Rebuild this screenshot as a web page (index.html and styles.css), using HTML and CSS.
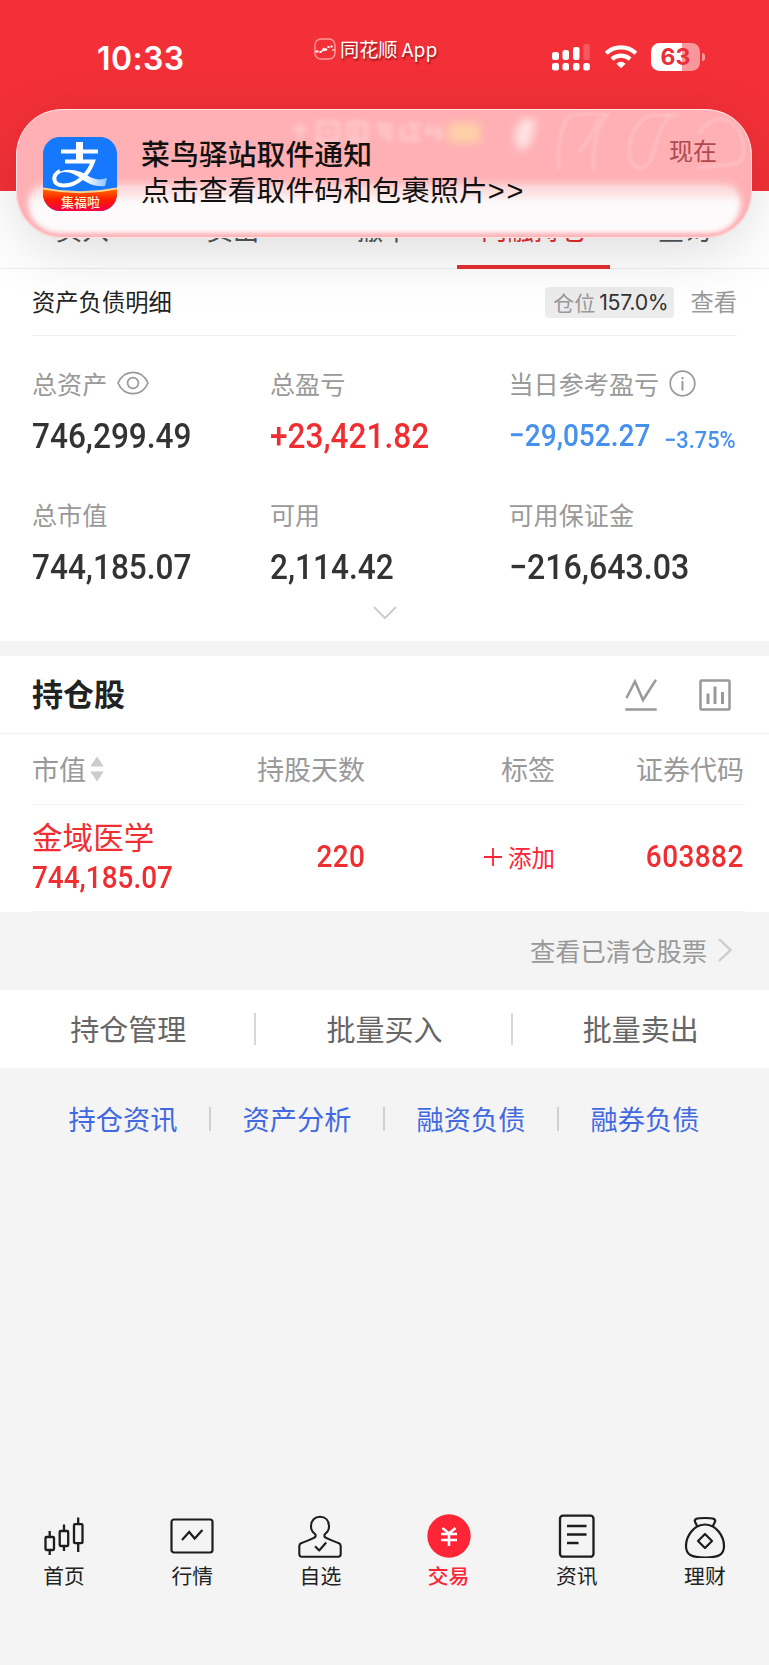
FILE: index.html
```html
<!DOCTYPE html>
<html lang="zh-CN">
<head>
<meta charset="utf-8">
<title>同花顺</title>
<link rel="stylesheet" href="styles.css">
</head>
<body>
<div class="app">
  <header class="top">
    <div class="status">
      <div class="time">10:33</div>
      <div class="appname">
        <svg width="22" height="22" viewBox="0 0 22 22" fill="none"><rect x="1" y="1" width="20" height="20" rx="6" stroke="#ff9a9a" stroke-width="1.4"/><path d="M1.500 13.500h3M5.500 14h2M7.500 12.500h1.500M9.500 10l1 3M12.500 10.500l-1 2M13.500 9h2M16.500 8.500h2" stroke="#fff" stroke-width="2.200"/><path d="M18 12h3" stroke="#fff"/></svg>
        <span>同花顺 App</span>
      </div>
      <div class="indicators">
        <svg class="signal" width="38" height="28" viewBox="0 0 38 28" fill="#fff"><rect y="9" width="7" height="8" rx="2.200"/><rect x="10.500" y="7" width="6.500" height="10" rx="2.200"/><rect x="21" y="4" width="6.500" height="13" rx="2.200"/><rect x="31.300" y="1" width="6.500" height="16" rx="2.200" opacity=".2"/><rect y="20" width="7" height="7.500" rx="2.200"/><rect x="10.500" y="20" width="6.500" height="7.500" rx="2.200"/><rect x="21" y="20" width="6.500" height="7.500" rx="2.200"/><rect x="31.300" y="20" width="6.500" height="7.500" rx="2.200"/></svg>
        <svg class="wifi" width="34" height="25" viewBox="0 0 34 25" fill="none" stroke="#fff" stroke-width="4.200"><path d="M2.200 9.200a21.500 21.500 0 0 1 29.600 0"/><path d="M7.900 15.100a13.400 13.400 0 0 1 18.200 0"/><path d="M12.400 19.800q4.600-3.900 9.200 0L17 24.300z" fill="#fff" stroke="none"/></svg>
        <div class="battery"><span>63</span></div>
      </div>
    </div>
  </header>

  <nav class="tabs">
    <div class="tab">买入</div><div class="tab">卖出</div><div class="tab">撤单</div><div class="tab on">两融持仓</div><div class="tab">查询</div>
  </nav>

  <section class="assets">
    <div class="assets-head">
      <span class="assets-title">资产负债明细</span>
      <span class="pos">仓位<b>157.0%</b></span>
      <span class="view">查看</span>
    </div>
    <div class="grid">
      <div class="cell"><div class="label">总资产<svg width="32" height="24" viewBox="0 0 32 24" fill="none" stroke="#999" stroke-width="1.700"><path d="M1 12C4 5 9.500 1.300 16 1.300S28 5 31 12C28 19 22.500 22.700 16 22.700S4 19 1 12z"/><circle cx="16" cy="12" r="5.400"/></svg></div><div class="num">746,299.49</div></div>
      <div class="cell"><div class="label">总盈亏</div><div class="num red">+23,421.82</div></div>
      <div class="cell"><div class="label">当日参考盈亏<svg width="27" height="27" viewBox="0 0 27 27" fill="none" stroke="#999" stroke-width="1.700"><circle cx="13.500" cy="13.500" r="12.300"/><path d="M13.500 11v9.500M13.500 7v2.200" stroke-width="2"/></svg></div><div class="num-row"><span class="num blue">−29,052.27</span><span class="pct">−3.75%</span></div></div>
      <div class="cell"><div class="label">总市值</div><div class="num">744,185.07</div></div>
      <div class="cell"><div class="label">可用</div><div class="num">2,114.42</div></div>
      <div class="cell"><div class="label">可用保证金</div><div class="num wide">−216,643.03</div></div>
    </div>
    <svg class="expand" width="24" height="14" viewBox="0 0 24 14" fill="none" stroke="#ccc" stroke-width="2"><path d="M1 1l11 11L23 1"/></svg>
  </section>

  <section class="holdings">
    <div class="holdings-head">
      <h2>持仓股</h2>
      <svg width="32" height="32" viewBox="0 0 32 32" fill="none" stroke="#999" stroke-width="2.500"><path d="M1.500 19L10 2.500l8 18.500L31 .8M.3 30.500h31.400"/></svg>
      <svg width="32" height="32" viewBox="0 0 32 32" fill="none" stroke="#999" stroke-width="2.500"><rect x="1.500" y="1.500" width="29" height="29" rx="1"/><path d="M9 14.500V25M16 7.500V25M23.500 13V25" stroke-width="3"/></svg>
    </div>
    <div class="row head">
      <div>市值<svg width="14" height="26" viewBox="0 0 14 26" fill="#ccc"><path d="M7 .5l6.700 10H.3zM.3 15.500h13.400L7 25.500z"/></svg></div><div>持股天数</div><div>标签</div><div>证券代码</div>
    </div>
    <div class="row body">
      <div class="stock"><span class="name">金域医学</span><span class="num small">744,185.07</span></div>
      <div><span class="num small r">220</span></div>
      <div class="add"><svg width="18" height="18" viewBox="0 0 18 18" stroke="#ff2436" stroke-width="1.800"><path d="M0 9h18M9 0v18"/></svg>添加</div>
      <div><span class="num small r">603882</span></div>
    </div>
  </section>

  <div class="cleared">查看已清仓股票<svg width="14" height="24" viewBox="0 0 14 24" fill="none" stroke="#ccc" stroke-width="2.400"><path d="M1 1l11.500 11L1 23"/></svg></div>

  <div class="actions"><div>持仓管理</div><div>批量买入</div><div>批量卖出</div></div>
  <div class="links"><a>持仓资讯</a><a>资产分析</a><a>融资负债</a><a>融券负债</a></div>

  <footer class="tabbar">
    <div class="item"><svg width="44" height="44" viewBox="0 0 44 44" fill="none" stroke="#1d1d1d" stroke-width="2.300"><rect x="3.500" y="23" width="8.500" height="13" rx="1"/><path d="M7.700 17v6M7.700 36v5"/><rect x="17.700" y="17" width="8.500" height="15" rx="1"/><path d="M22 10.500V17M22 32v5"/><rect x="32" y="10.200" width="8.500" height="19" rx="1"/><path d="M36.200 3.500v7M36.200 29v9"/></svg><span>首页</span></div>
    <div class="item"><svg width="44" height="44" viewBox="0 0 44 44" fill="none" stroke="#1d1d1d" stroke-width="2.200"><rect x="1.500" y="5.500" width="41" height="33" rx="2.500"/><path d="M12 26l7.200-8 5.500 6.500 7.700-8.500"/></svg><span>行情</span></div>
    <div class="item"><svg width="44" height="44" viewBox="0 0 44 44" fill="none" stroke="#1d1d1d" stroke-width="2.100" stroke-linejoin="round"><path d="M17.500 20.500C14 18 13 15 13 12.500 13 6 17 2.800 22 2.800S31 6 31 12.500c0 2.500-1 5.500-4.500 8v2.300c2 2 7 3.500 14 6.200 1.500.6 2.200 1.500 2.200 3V40c0 1.800-.8 2.700-2.500 2.700H3.800c-1.700 0-2.500-.9-2.500-2.700v-8c0-1.500.7-2.400 2.200-3 7-2.700 12-4.200 14-6.200z"/><path d="M17 32.300l4.200 4.200 7-8"/></svg><span>自选</span></div>
    <div class="item on"><svg width="44" height="44" viewBox="0 0 44 44" fill="none"><circle cx="22" cy="22" r="21.700" fill="#ff2436"/><path d="M15.500 14l6.500 5.500 6.500-5.500M14 20h16M14 26h16M22 19v13" stroke="#fff" stroke-width="2.500"/></svg><span>交易</span></div>
    <div class="item"><svg width="44" height="44" viewBox="0 0 44 44" fill="none" stroke="#1d1d1d" stroke-width="2.300"><rect x="5" y="1.700" width="33.500" height="41" rx="3"/><path d="M12 12h19.500M12 20.500h19.500M12 29h11.500"/></svg><span>资讯</span></div>
    <div class="item"><svg width="44" height="44" viewBox="0 0 44 44" fill="none" stroke="#1d1d1d" stroke-width="2.200" stroke-linejoin="round"><path d="M14.500 12.800l-2.500-5c-1-2.700 1-3.800 10-3.800s11 1.100 10 3.800l-2.500 5"/><path d="M22 10.500C33 10.500 41 22 41 32 41 40.500 36 43.500 22 43.500S3 40.500 3 32C3 22 11 10.500 22 10.500z"/><path d="M22 20l7 7-7 7-7-7z"/></svg><span>理财</span></div>
  </footer>

  <aside class="banner">
    <div class="glass">
      <i class="g badge"></i><i class="g spark"></i>
      <svg class="g smudge" width="160" height="30" viewBox="0 0 160 30" stroke="#fff" stroke-width="4" fill="none"><path d="M4 13h16M12 6v18M30 6h20v18H30zM36 15h8M60 6h18v18H60zM68 6v18M88 8h16M102 8v16M90 14h6v8M114 8v14h18M120 8h12M126 8v14M142 8l-5 8M148 8l5 8M139 16h14l-3 8"/></svg>
      <svg class="g curves" width="200" height="64" viewBox="0 0 200 64" fill="none" stroke="#ffd4d7" stroke-width="2.500"><path d="M12 60C8 44 12 14 22 6Q26 3 62 4M50 8Q46 26 30 42M58 6Q44 22 46 62M124 4C100 26 112 58 90 58 72 50 84 8 104 5H130M150 24Q172-6 192 22 202 50 186 54L150 58"/></svg>
    </div>
    <svg class="logo" width="74" height="74" viewBox="0 0 74 74">
      <defs><clipPath id="c"><rect width="74" height="74" rx="17"/></clipPath>
      <linearGradient id="r" x2="0" y2="1"><stop stop-color="#ff6a00"/><stop offset=".5" stop-color="#ff1a00"/><stop offset="1" stop-color="#f7004a"/></linearGradient>
      <linearGradient id="w"><stop offset=".55" stop-color="#fff"/><stop offset="1" stop-color="#8fc3ff"/></linearGradient></defs>
      <g clip-path="url(#c)"><rect width="74" height="74" fill="#1677ff"/>
        <g fill="none" stroke="#fff" stroke-width="4"><path d="M18 14.500h37" /><path d="M36.500 5v19" stroke-width="7"/><path d="M22 24.500h28C46 36 35 49 20 48.500 9 48 9 38 17 34"/></g>
        <path d="M13 38c8-9 24-5 34 2 6 3 11 3 17 1l-2 8c-9 1-16-2-22-6-9-7-19-11-27-5z" fill="url(#w)"/>
        <path d="M0 52q37 7 74 0v22H0z" fill="url(#r)"/><path d="M0 51.500q37 7.500 74 0" fill="none" stroke="#ffd08a" stroke-width="1.800"/>
        <text class="logo-text" x="37.500" y="70" text-anchor="middle">集福啦</text></g>
    </svg>
    <div class="msg"><strong>菜鸟驿站取件通知</strong><span>点击查看取件码和包裹照片<em>&gt;&gt;</em></span></div>
    <time>现在</time>
  </aside>
</div>
</body>
</html>
```
FILE: styles.css
```css
* { box-sizing: border-box; }
body { margin: 0; background: #f4f4f4; font-family: "Noto Sans CJK SC", sans-serif; color: #222; }
svg { display: block; flex: none; }
.app { position: relative; width: 769px; height: 1665px; overflow: hidden; display: flex; flex-direction: column; }

.top { height: 191px; flex: none; background: #f33038; }
.status { display: grid; grid-template-columns: 314px auto 1fr; padding-top: 37px; height: 80px; color: #fff; }
.time { padding: 2px 0 0 97px; font: 600 32px/40px Inter, sans-serif; letter-spacing: .4px; }
.appname { display: flex; gap: 4px; height: 24px; align-items: center; font-size: 19.200px; line-height: 24px; text-shadow: 1px 2px 2px rgba(90, 0, 0, .6); white-space: nowrap; }
.appname svg { margin-top: -1px; }
.indicators { display: flex; justify-content: flex-end; padding: 6px 69px 0 0; margin-left: -12px; }
.wifi { margin: 1px 13px 0 14px; }
.battery { position: relative; width: 49px; height: 28px; border-radius: 8.500px; background: linear-gradient(90deg, #fff 31px, #f9979b 31px); color: #e8303a; text-align: center; font: 700 23px/28px Inter, sans-serif; }
.battery::after { content: ""; position: absolute; left: 51px; top: 10px; width: 3px; height: 8px; border-radius: 0 3px 3px 0; background: #f9979b; }

.tabs { height: 78px; flex: none; display: grid; grid-template-columns: repeat(5, 150.500px); padding-left: 7px; background: #fff; border-bottom: 1px solid #ebebeb; }
.tab { text-align: center; font-size: 26.500px; line-height: 76px; color: #555; position: relative; }
.tab.on { color: #e62e2e; }
.tab.on::after { content: ""; position: absolute; left: -1.500px; width: 153px; bottom: -1px; height: 4px; background: #e62e2e; }

.assets { height: 372px; flex: none; padding: 0 32px; background: #fff; }
.assets-head { display: flex; align-items: center; height: 67px; border-bottom: 1px solid #efefef; font-size: 23.300px; }
.assets-head > span { padding-bottom: 2px; }
.assets-title { flex: 1; }
.assets-head .pos { display: flex; align-items: center; gap: 4px; height: 31px; padding: 0 6px 0 8px; border-radius: 4px; background: #ececec; color: #999; font-size: 21px; }
.pos b { font: 400 21.300px/31px Inter, sans-serif; letter-spacing: -.3px; color: #333; }
.view { margin-left: 16px; color: #999; }
.grid { display: grid; grid-template-columns: 238px 238.500px 1fr; grid-auto-rows: 131px; padding-top: 29px; height: 270px; }
.label { display: flex; align-items: center; gap: 10px; height: 36px; font-size: 25.100px; line-height: 36px; color: #999; white-space: nowrap; }
.num { display: block; width: max-content; font: 500 35.500px/40px Roboto, sans-serif; color: #333; transform: scaleX(.89); transform-origin: 0 50%; margin-top: 15px; }
.num.wide { transform: scaleX(.905); }
.red { color: #f02e31; }
.num-row { display: flex; height: 55px; }
.num.blue { font-size: 31.500px; color: #4691ee; margin-right: -3px; }
.pct { font: 500 24px/40px Roboto, sans-serif; color: #4691ee; transform: scaleX(.91); transform-origin: 0 50%; margin-top: 19px; }
.expand { margin: 0 auto; }

.holdings { margin-top: 15px; height: 256px; flex: none; background: #fff; }
.holdings-head { height: 78px; padding: 0 38px 0 32px; display: flex; align-items: center; gap: 42px; border-bottom: 1px solid #f1f1f1; }
h2 { flex: 1; margin: 0; padding-bottom: 4px; font-size: 31px; font-weight: 600; line-height: 42px; }
.row { display: grid; grid-template-columns: 140px 193px 190px 189px; margin: 0 24px 0 32px; border-bottom: 1px solid #f3f3f3; align-items: center; }
.row > div { display: flex; justify-content: flex-end; }
.row > div:first-child { justify-content: flex-start; }
.head { height: 71px; font-size: 27px; color: #999; }
.head > div { align-items: center; gap: 4px; line-height: 36px; }
.body { height: 107px; padding-bottom: 2px; color: #f02e31; }
.row .stock { flex-direction: column; }
.name { font-size: 30.600px; line-height: 36px; padding-bottom: 5px; }
.num.small { font-size: 31px; line-height: 38px; margin: 0; color: #f02e31; transform: scaleX(.9); }
.num.r { transform-origin: 100% 50%; letter-spacing: .5px; }
.row .add { align-items: center; gap: 6px; font-size: 23.500px; color: #ff2436; }

.cleared { height: 78px; flex: none; padding: 0 37px 2px 0; display: flex; align-items: center; justify-content: flex-end; gap: 11px; font-size: 25.300px; color: #999; }
.actions { height: 78px; flex: none; display: grid; grid-template-columns: repeat(3, 1fr); background: #fff; font-size: 29px; line-height: 77px; text-align: center; color: #666; }
.actions div, .links a { position: relative; }
.actions div + div::before { content: ""; position: absolute; left: -2px; top: 23px; width: 2px; height: 32px; background: #d8d8d8; }
.links { height: 104px; flex: none; margin: 0 36px; display: grid; grid-template-columns: repeat(4, 174px); font-size: 27.200px; line-height: 100px; text-align: center; color: #4169e1; }
.links a + a::before { content: ""; position: absolute; left: -1px; top: 39px; width: 2px; height: 24px; background: #d0d0d0; }

.tabbar { margin-top: auto; height: 151px; flex: none; display: grid; grid-template-columns: repeat(6, 1fr); }
.item { display: flex; flex-direction: column; align-items: center; font-size: 20.800px; line-height: 30px; color: #222; }
.item span { margin-top: 2px; }
.item.on { color: #ff2436; font-weight: 500; }

.banner { position: absolute; left: 16px; top: 109px; width: 736px; height: 129px; display: flex; padding: 28px 35px 0 27px; border-radius: 46px; background: #ffb0b4; box-shadow: 0 14px 64px -6px rgba(0, 0, 0, .16); }
.glass { position: absolute; inset: 0; border-radius: 46px; overflow: hidden; }
.glass::before { content: ""; position: absolute; left: 14px; right: 13px; top: 80px; bottom: 6px; border-radius: 18px 18px 34px 34px; background: linear-gradient(rgba(252, 250, 250, .55), #fcfafa 14px); box-shadow: 0 0 4px 1px #fcfafa, 0 -5px 10px rgba(252, 250, 250, .5); filter: blur(2px); }
.glass::after { content: ""; position: absolute; inset: 0; border-radius: 46px; border: 1.500px solid rgba(255, 235, 235, .85); box-shadow: inset 0 0 5px 1px #ffb0b4; }
.g { position: absolute; }
.badge { left: 432px; top: 14px; width: 32px; height: 20px; background: #ffd0a8; filter: blur(4px); }
.spark { left: 499px; top: 9px; width: 18px; height: 32px; border-radius: 50% 0 50% 50%; background: #ffe2e4; filter: blur(4px); transform: rotate(12deg); }
.smudge { left: 272px; top: 8px; opacity: .32; filter: blur(2.500px); }
.curves { left: 532px; top: 1px; opacity: .55; filter: blur(1.500px); }
.logo { position: relative; }
.logo-text { font-size: 13px; font-weight: 500; fill: #fff0d0; }
.msg { position: relative; flex: 1; display: flex; flex-direction: column; padding-left: 24px; font-family: "Liberation Sans", "Noto Sans CJK SC", sans-serif; font-size: 28.900px; line-height: 36px; color: #111; white-space: nowrap; }
.msg strong { font-weight: 500; }
.msg em { font-style: normal; letter-spacing: 2px; }
time { position: relative; font-size: 24px; line-height: 26px; color: #b04a50; }
```
